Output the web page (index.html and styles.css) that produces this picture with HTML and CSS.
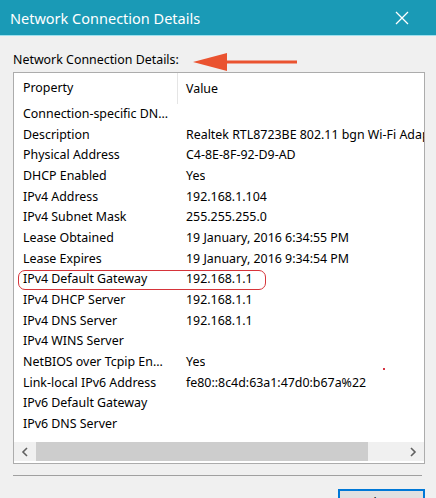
FILE: index.html
```html
<!DOCTYPE html>
<html>
<head>
<meta charset="utf-8">
<link rel="stylesheet" href="styles.css">
</head>
<body>
<div class="window">
  <div class="titlebar">
    <span class="title">Network Connection Details</span>
    <svg class="close" width="14" height="14" viewBox="0 0 14 14"><path d="M1 1 L13 13 M13 1 L1 13" stroke="#ffffff" stroke-width="1.3" fill="none"/></svg>
  </div>
  <div class="content">
    <div class="label">Network Connection Details:</div>
    <div class="listbox">
      <div class="head">
        <div class="c1">Property</div>
        <div class="c2">Value</div>
      </div>
      <div class="rows">
        <div class="row"><div class="c1">Connection-specific DN...</div><div class="c2"></div></div>
        <div class="row"><div class="c1">Description</div><div class="c2">Realtek RTL8723BE 802.11 bgn Wi-Fi Adapter</div></div>
        <div class="row"><div class="c1">Physical Address</div><div class="c2">C4-8E-8F-92-D9-AD</div></div>
        <div class="row"><div class="c1">DHCP Enabled</div><div class="c2">Yes</div></div>
        <div class="row"><div class="c1">IPv4 Address</div><div class="c2">192.168.1.104</div></div>
        <div class="row"><div class="c1">IPv4 Subnet Mask</div><div class="c2">255.255.255.0</div></div>
        <div class="row"><div class="c1">Lease Obtained</div><div class="c2">19 January, 2016 6:34:55 PM</div></div>
        <div class="row"><div class="c1">Lease Expires</div><div class="c2">19 January, 2016 9:34:54 PM</div></div>
        <div class="row"><div class="c1">IPv4 Default Gateway</div><div class="c2">192.168.1.1</div></div>
        <div class="row"><div class="c1">IPv4 DHCP Server</div><div class="c2">192.168.1.1</div></div>
        <div class="row"><div class="c1">IPv4 DNS Server</div><div class="c2">192.168.1.1</div></div>
        <div class="row"><div class="c1">IPv4 WINS Server</div><div class="c2"></div></div>
        <div class="row"><div class="c1">NetBIOS over Tcpip En...</div><div class="c2">Yes</div></div>
        <div class="row"><div class="c1">Link-local IPv6 Address</div><div class="c2">fe80::8c4d:63a1:47d0:b67a%22</div></div>
        <div class="row"><div class="c1">IPv6 Default Gateway</div><div class="c2"></div></div>
        <div class="row"><div class="c1">IPv6 DNS Server</div><div class="c2"></div></div>
      </div>
      <div class="hscroll">
        <svg class="arrow" width="8" height="10" viewBox="0 0 8 10"><path d="M6 1 L2 5 L6 9" stroke="#606060" stroke-width="1.6" fill="none"/></svg>
        <div class="track"><div class="thumb"></div></div>
        <svg class="arrow" width="8" height="10" viewBox="0 0 8 10"><path d="M2 1 L6 5 L2 9" stroke="#606060" stroke-width="1.6" fill="none"/></svg>
      </div>
    </div>
    <div class="sep"></div>
    <div class="buttons"><div class="btn">Close</div></div>
  </div>
  <div class="mark-oval"></div>
  <svg class="mark-arrow" width="106" height="20" viewBox="0 0 106 20"><path d="M30 10 L104 10" stroke="#ea5330" stroke-width="3" fill="none"/><path d="M0 10 L34 1 L34 19 Z" fill="#ea5330"/></svg>
  <div class="mark-dot"></div>
</div>
</body>
</html>
```
FILE: styles.css
```css
html, body {
  margin: 0;
  padding: 0;
  background: #f0f0f0;
}
.window {
  position: relative;
  width: 436px;
  height: 498px;
  overflow: hidden;
  font-family: "Noto Sans", "Liberation Sans", sans-serif;
  color: #000;
}
.titlebar {
  height: 36px;
  background: #1a9ab6;
  border-bottom: 1px solid #9ee0ee;
  display: flex;
  align-items: center;
  justify-content: space-between;
  padding: 0 27px 0 10px;
  box-sizing: border-box;
}
.title {
  color: #ffffff;
  font-size: 14.5px;
}
.content {
  padding: 0 11px 0 13px;
}
.label {
  font-size: 12.4px;
  margin-top: 13px;
  height: 23px;
  line-height: 22px;
}
.listbox {
  height: 392px;
  border: 1px solid #acacac;
  background: #ffffff;
  box-sizing: border-box;
  display: flex;
  flex-direction: column;
  overflow: hidden;
}
.head, .row {
  display: flex;
  font-size: 12.4px;
  white-space: nowrap;
}
.head {
  height: 31px;
  align-items: center;
}
.head .c1 {
  border-right: 1px solid #e5e5e5;
  height: 31px;
  line-height: 30px;
}
.c1 {
  width: 164px;
  flex: none;
  padding-left: 9px;
  box-sizing: border-box;
  overflow: hidden;
}
.c2 {
  padding-left: 8px;
  overflow: hidden;
}
.rows {
  flex: 1;
  overflow: hidden;
}
.row {
  height: 20.67px;
  line-height: 20.67px;
}
.hscroll {
  height: 19px;
  margin-bottom: 2px;
  background: #f0f0f0;
  display: flex;
  align-items: center;
}
.arrow {
  width: 22px;
  flex: none;
}
.track {
  flex: 1;
  height: 100%;
  display: flex;
}
.thumb {
  width: 332px;
  height: 100%;
  background: #cdcdcd;
}
.sep {
  height: 1px;
  background: #a0a0a0;
  margin: 11px 3px 0 0;
}
.buttons {
  display: flex;
  justify-content: flex-end;
  margin-top: 13px;
}
.btn {
  width: 87px;
  height: 26px;
  border: 2px solid #0078d7;
  box-sizing: border-box;
  background: #e1e1e1;
  font-size: 12.4px;
  text-align: center;
  line-height: 24px;
}
.mark-oval {
  position: absolute;
  left: 18px;
  top: 270px;
  width: 246px;
  height: 18px;
  border: 1px solid #d6343a;
  border-radius: 7px;
}
.mark-arrow {
  position: absolute;
  left: 193px;
  top: 52px;
}
.mark-dot {
  position: absolute;
  left: 383px;
  top: 368px;
  width: 2px;
  height: 2px;
  background: #d63444;
}
```
